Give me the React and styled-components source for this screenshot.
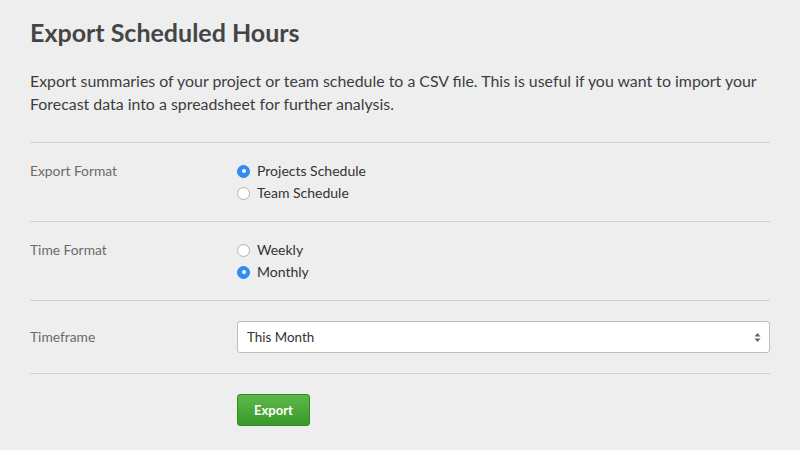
import React from "react";
import styled, { createGlobalStyle } from "styled-components";

const GlobalStyle = createGlobalStyle`
  html, body {
    margin: 0;
    padding: 0;
    background: #eeeeee;
  }
  body {
    font-family: Lato, "Open Sans", sans-serif;
    color: #444;
  }
`;

const Page = styled.div`
  width: 800px;
  height: 450px;
  box-sizing: border-box;
  padding: 17px 30px 0 30px;
  background: #eeeeee;
`;

const Title = styled.h1`
  margin: 0;
  font-size: 25px;
  line-height: 30px;
  font-weight: 700;
  color: #454545;
`;

const Intro = styled.p`
  margin: 22px 0 0 0;
  font-size: 15.9px;
  line-height: 23px;
  color: #3d3d3d;
  padding-bottom: 27px;
  border-bottom: 1px solid #cfcfcf;
`;

const Row = styled.div`
  display: grid;
  grid-template-columns: 207px 1fr;
  align-items: ${(p) => (p.center ? "center" : "start")};
  padding: ${(p) => p.pad || "19px 0 19px 0"};
  border-bottom: ${(p) => (p.last ? "none" : "1px solid #cfcfcf")};
`;

const Label = styled.div`
  font-size: 13.8px;
  line-height: 22px;
  color: #6b6b6b;
`;

const Options = styled.div`
  display: flex;
  flex-direction: column;
`;

const Option = styled.label`
  display: flex;
  align-items: center;
  gap: 7px;
  font-size: 14px;
  line-height: 22px;
  color: #333;
`;

const Dot = styled.span`
  width: 13px;
  height: 13px;
  border-radius: 50%;
  box-sizing: border-box;
  display: flex;
  align-items: center;
  justify-content: center;
  background: ${(p) => (p.checked ? "#2f8df5" : "#fff")};
  border: 1px solid ${(p) => (p.checked ? "#2a86ee" : "#b3b3b3")};
  &::after {
    content: "";
    width: 4px;
    height: 4px;
    border-radius: 50%;
    background: #fff;
    display: ${(p) => (p.checked ? "block" : "none")};
  }
`;

const Select = styled.div`
  height: 32px;
  box-sizing: border-box;
  background: #fff;
  border: 1px solid #bdbdbd;
  border-radius: 3px;
  display: flex;
  align-items: center;
  justify-content: space-between;
  padding: 0 8px 0 9px;
  font-size: 13.4px;
  color: #333;
`;

const Button = styled.button`
  width: 73px;
  height: 32px;
  border: 1px solid #2f8a1f;
  border-radius: 3px;
  background: linear-gradient(#5cb84a, #3a9a29);
  color: #fff;
  font-family: Lato, "Open Sans", sans-serif;
  font-weight: 700;
  font-size: 13px;
  padding: 0;
`;

const Radio = ({ checked, children }) => (
  <Option>
    <Dot checked={checked} />
    {children}
  </Option>
);

const Arrows = () => (
  <svg width="7" height="11" viewBox="0 0 7 11">
    <path d="M3.5 1 L6.5 4.5 H0.5 Z" fill="#666" />
    <path d="M3.5 10 L6.5 6.5 H0.5 Z" fill="#666" />
  </svg>
);

export default function App() {
  return (
    <Page>
      <GlobalStyle />
      <Title>Export Scheduled Hours</Title>
      <Intro>
        Export summaries of your project or team schedule to a CSV file. This is useful if you
        want to import your Forecast data into a spreadsheet for further analysis.
      </Intro>
      <Row pad="17px 0 17px 0">
        <Label>Export Format</Label>
        <Options>
          <Radio checked>Projects Schedule</Radio>
          <Radio>Team Schedule</Radio>
        </Options>
      </Row>
      <Row pad="17px 0 17px 0">
        <Label>Time Format</Label>
        <Options>
          <Radio>Weekly</Radio>
          <Radio checked>Monthly</Radio>
        </Options>
      </Row>
      <Row center pad="20px 0 20px 0">
        <Label>Timeframe</Label>
        <Select>
          <span>This Month</span>
          <Arrows />
        </Select>
      </Row>
      <Row last pad="20px 0 0 0">
        <div />
        <div>
          <Button>Export</Button>
        </div>
      </Row>
    </Page>
  );
}
